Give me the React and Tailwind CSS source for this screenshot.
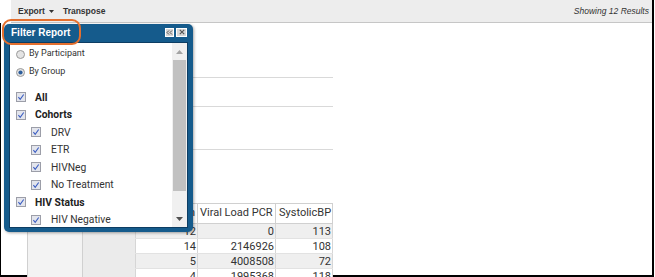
import React from 'react';

const Check = () => (
  <svg width="10" height="10" viewBox="0 0 10 10" className="shrink-0">
    <rect x="0.5" y="0.5" width="9" height="9" fill="#e3e5ec" stroke="#9c9ea8" />
    <path d="M2.4 5.1 L4.2 7.3 L7.7 2.5" fill="none" stroke="#3a5cc2" strokeWidth="1.1" />
  </svg>
);

const Radio = ({ on }) => (
  <svg width="9" height="9" viewBox="0 0 9 9" className="shrink-0">
    <circle cx="4.5" cy="4.5" r="4" fill="#e4e4e4" stroke="#9a9a9a" />
    {on && <circle cx="4.5" cy="4.5" r="2.1" fill="#2d5e9c" />}
  </svg>
);

const items = [
  { label: 'All', level: 0 },
  { label: 'Cohorts', level: 0 },
  { label: 'DRV', level: 1 },
  { label: 'ETR', level: 1 },
  { label: 'HIVNeg', level: 1 },
  { label: 'No Treatment', level: 1 },
  { label: 'HIV Status', level: 0 },
  { label: 'HIV Negative', level: 1 },
];

const rows = [
  ['12', '0', '113'],
  ['14', '2146926', '108'],
  ['5', '4008508', '72'],
  ['4', '1995368', '118'],
];

function FilterPanel() {
  return (
    <div className="absolute left-[4px] top-[24px] w-[189px] h-[208px] rounded-[5px] bg-[#155b8c] shadow-[1px_1px_3px_rgba(0,0,0,0.35)] flex flex-col px-[5px] pb-[4px]">
      {/* header */}
      <div className="h-[18px] flex items-center justify-between pl-[2px] pr-[1px]">
        <span className="text-white font-bold text-[10px] font-['Liberation_Sans',Arial,sans-serif] leading-none">Filter Report</span>
        <div className="flex gap-[2px] mt-[-2px]">
          <div className="w-[9px] h-[9px] bg-[#d6d6d6] border border-white flex items-center justify-center">
            <svg width="7" height="5" viewBox="0 0 7 5">
              <path d="M3 0.5 L1 2.5 L3 4.5 M6 0.5 L4 2.5 L6 4.5" fill="none" stroke="#555" strokeWidth="1" />
            </svg>
          </div>
          <div className="w-[11px] h-[9px] bg-[#d6d6d6] border border-white flex items-center justify-center">
            <svg width="6" height="6" viewBox="0 0 6 6">
              <path d="M0.8 0.8 L5.2 5.2 M5.2 0.8 L0.8 5.2" stroke="#555" strokeWidth="1.1" />
            </svg>
          </div>
        </div>
      </div>
      {/* body */}
      <div className="flex-1 bg-white border border-[#0d3d63] flex overflow-hidden font-['Roboto',Arial,sans-serif] text-[#333]">
        <div className="flex-1 pt-[2px] overflow-hidden">
          <div className="h-[18px] flex items-center pl-[6px] gap-[4px] text-[9px]">
            <Radio />
            <span>By Participant</span>
          </div>
          <div className="h-[18px] flex items-center pl-[6px] gap-[4px] text-[9px]">
            <Radio on />
            <span>By Group</span>
          </div>
          <div className="mt-[7.5px]">
            {items.map((it) => (
              <div
                key={it.label}
                className={`h-[17.5px] flex items-center text-[10.3px] ${
                  it.level === 0 ? 'pl-[6px] gap-[9px] font-bold text-[#222]' : 'pl-[21px] gap-[10px]'
                }`}
              >
                <Check />
                <span className="whitespace-nowrap">{it.label}</span>
              </div>
            ))}
          </div>
        </div>
        {/* scrollbar */}
        <div className="w-[15px] bg-[#f0f0f0] flex flex-col">
          <div className="h-[17px] flex items-center justify-center">
            <svg width="7" height="4" viewBox="0 0 7 4">
              <path d="M0 4 L3.5 0 L7 4 Z" fill="#a3a3a3" />
            </svg>
          </div>
          <div className="mx-[1px] h-[131px] bg-[#c1c1c1]" />
          <div className="flex-1" />
          <div className="h-[17px] flex items-center justify-center">
            <svg width="7" height="4" viewBox="0 0 7 4">
              <path d="M0 0 L3.5 4 L7 0 Z" fill="#505050" />
            </svg>
          </div>
        </div>
      </div>
    </div>
  );
}

export default function App() {
  return (
    <div className="w-[655px] h-[277px] bg-white relative overflow-hidden">
      <div className="w-[654px] h-[277px] border-r-2 border-b-2 border-black flex flex-col">
        {/* toolbar */}
        <div className="ml-[11px] h-[23px] shrink-0 bg-[#ededed] border-b border-[#c6c6c6] flex items-center justify-between pl-[7px] pr-[3px] font-['Liberation_Sans',Arial,sans-serif] text-[#333]">
          <div className="flex items-center gap-[9px] text-[8.5px] font-bold">
            <span className="flex items-center gap-[4px]">
              Export
              <svg width="5" height="3" viewBox="0 0 5 3">
                <path d="M0 0 L5 0 L2.5 3 Z" fill="#333" />
              </svg>
            </span>
            <span>Transpose</span>
          </div>
          <span className="italic text-[8.5px]">Showing 12 Results</span>
        </div>
        {/* content */}
        <div className="flex-1 border-l border-black font-['Roboto',Arial,sans-serif] text-[11px] text-[#333]">
          <div className="ml-[26px] w-[306px] h-[55px] border-b border-[#d9d9d9]" />
          <div className="ml-[26px] w-[306px] h-[29px] border-b border-[#d9d9d9]" />
          <div className="ml-[26px] w-[306px] h-[43px] border-b border-[#d9d9d9]" />
          <div className="h-[53px]" />
          <div className="ml-[26px] w-[306px]">
            <div className="h-[21px] flex border-t border-b border-[#d0d0d0]">
              <div className="w-[55px] bg-[#f3f3f3] border-l border-[#d0d0d0]" />
              <div className="w-[53px] bg-[#ebebeb] border-l border-[#d0d0d0]" />
              <div className="w-[62px] border-l border-[#d0d0d0] flex items-center justify-end pr-[2px] overflow-hidden whitespace-nowrap">Hemoglobin</div>
              <div className="w-[78px] border-l border-[#d0d0d0] flex items-center pl-[2px] whitespace-nowrap">Viral Load PCR</div>
              <div className="w-[58px] border-l border-r border-[#d0d0d0] flex items-center pl-[3px] whitespace-nowrap">SystolicBP</div>
            </div>
            {rows.map((r, i) => (
              <div key={i} className="h-[15px] flex">
                <div className="w-[55px] bg-[#f3f3f3] border-l border-[#d0d0d0]" />
                <div className="w-[53px] bg-[#ebebeb] border-l border-[#d0d0d0]" />
                <div className={`w-[198px] flex border-b border-[#e2e2e2] ${i % 2 === 0 ? 'bg-[#efefef]' : 'bg-white'}`}>
                  <div className="w-[62px] border-l border-[#d6d6d6] flex items-center justify-end pr-[1px] leading-none">{r[0]}</div>
                  <div className="w-[78px] border-l border-[#d6d6d6] flex items-center justify-end pr-[1px] leading-none">{r[1]}</div>
                  <div className="w-[58px] border-l border-r border-[#d6d6d6] flex items-center justify-end pr-[1px] leading-none">{r[2]}</div>
                </div>
              </div>
            ))}
          </div>
        </div>
      </div>

      <FilterPanel />

      {/* annotation */}
      <div className="absolute left-[2px] top-[19px] w-[79px] h-[26px] rounded-[9px] border-2 border-[#e46f2e]" />
    </div>
  );
}
